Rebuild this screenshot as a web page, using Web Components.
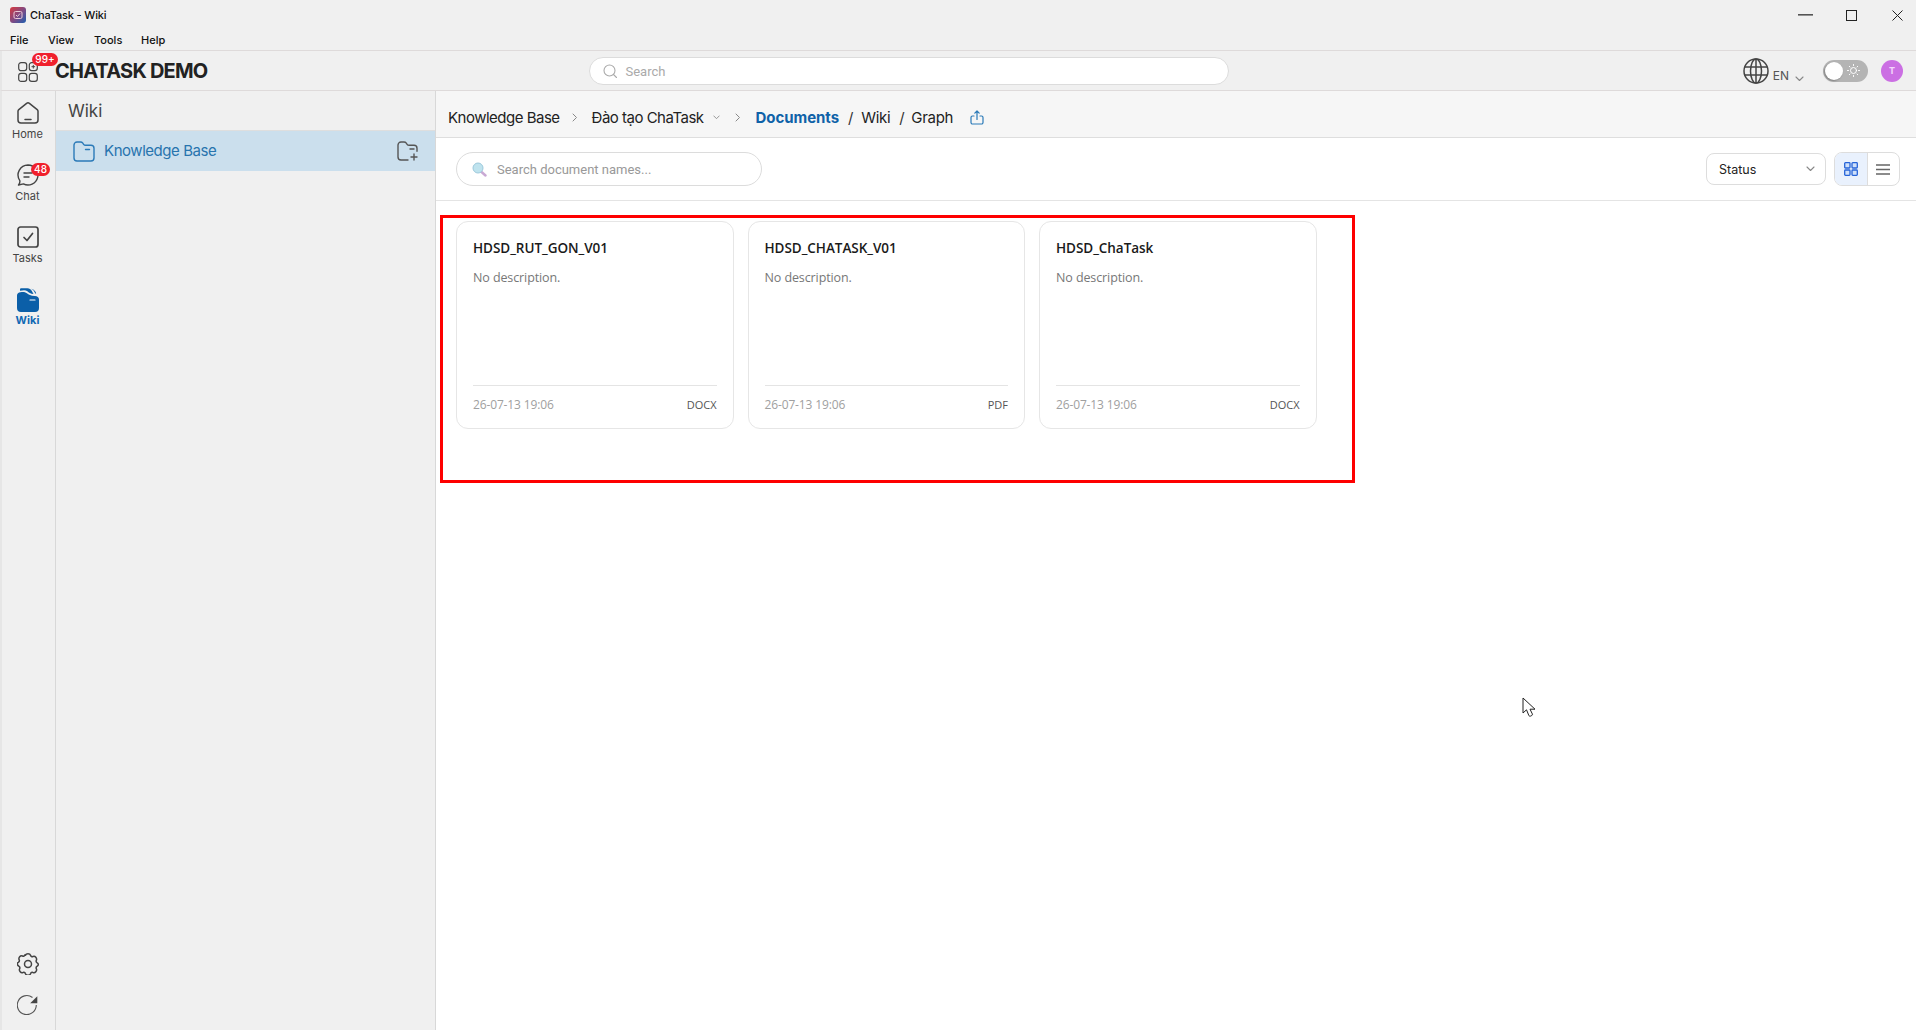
<!DOCTYPE html>
<html lang="en">
<head>
<meta charset="utf-8">
<title>ChaTask - Wiki</title>
<style>
    html, body { margin: 0; height: 100%; overflow: hidden; background: #fff; font-family: "Inter", "Liberation Sans", sans-serif; }
</style>
</head>
<body>
<chatask-app></chatask-app>

<script>
const ICONS = {
    home: `<svg width="22" height="22" viewBox="0 0 22 22" fill="none" stroke="#444" stroke-width="1.5" stroke-linejoin="round" stroke-linecap="round"><path d="M1 9.2c0-.7.3-1.2.8-1.6L9.6 1.3c.8-.6 2-.6 2.8 0l7.8 6.3c.5.4.8.9.8 1.6V18a3 3 0 0 1-3 3H4a3 3 0 0 1-3-3z"/><path d="M8 17.5h6"/></svg>`,
    chat: `<svg width="22" height="22" viewBox="0 0 22 22" fill="none" stroke="#444" stroke-width="1.4" stroke-linejoin="round" stroke-linecap="round"><path d="M11 1a10 10 0 1 1-4.6 18.9L1.5 21c1.3-1.6 1.6-3 1.3-4.4A10 10 0 0 1 11 1z"/><path d="M7 9h8M7 13h5"/></svg>`,
    tasks: `<svg width="22" height="22" viewBox="0 0 22 22" fill="none" stroke="#444" stroke-width="1.7" stroke-linejoin="round" stroke-linecap="round"><rect x="1" y="1" width="20" height="20" rx="2.5"/><path d="M7 11.5l3 3 5.5-7"/></svg>`,
    wiki: `<svg width="22" height="24" viewBox="0 0 22 24"><path fill="#0b5fa8" d="M3 1.5C3 .8 3.6.3 4.400.3h6.100c1.800 0 3.300 1 4.200 2.500l1.800 3.200c-3-.2-4.700-1.600-6.100-2.800-1.800-1.300-4-1.200-7.400-.4z"/><path fill="#0b5fa8" d="M14 .8c1.400.4 2.600 1.500 3.500 3.200l.7 1.600 1-.1c-.6-2.300-2.400-4.300-5.200-4.700z"/><path fill="#0b5fa8" d="M0 7.500C0 5.600 1.500 4.400 3.400 4.200c2.900-.4 4.500-.3 6.500 1.100 1.700 1.300 3.700 2.600 8 2.700 2.400 0 4.100 1.300 4.100 3.400V20a4 4 0 0 1-4 4H4a4 4 0 0 1-4-4z"/><path d="M13 12h5" stroke="#fff" stroke-width="1.200" stroke-linecap="round"/></svg>`,
    settings: `<svg width="22" height="22" viewBox="0 0 22 22" fill="none" stroke="#444" stroke-width="1.5" stroke-linejoin="round"><path d="M8.500 2.300c.3-1 1.300-1.500 2.500-1.500s2.200.5 2.500 1.500c.3 1.100 1.500 1.700 2.500 1.200 1-.4 2-.2 2.800.8.700.9 1.100 1.900.6 2.800-.5 1-.1 2.200.8 2.800.8.500 1.100 1 1.100 1.600s-.3 1.100-1.100 1.600c-.9.600-1.300 1.800-.8 2.800.5.900.1 1.900-.6 2.800-.8 1-1.800 1.200-2.800.8-1-.5-2.200.1-2.500 1.200-.3 1-1.300 1.500-2.500 1.500s-2.200-.5-2.500-1.500c-.3-1.100-1.500-1.700-2.500-1.200-1 .4-2 .2-2.800-.8-.7-.9-1.100-1.900-.6-2.800.5-1 .1-2.200-.8-2.800C.5 12.100.2 11.600.2 11s.3-1.100 1.100-1.600c.9-.6 1.300-1.800.8-2.800-.5-.9-.1-1.900.6-2.800.8-1 1.800-1.200 2.800-.8 1 .5 2.200-.1 2.500-1.200z"/><circle cx="11" cy="11" r="3.500"/></svg>`,
    refresh: `<svg width="21" height="21" viewBox="0 0 21 21" fill="none"><path d="M15.500 3.500A9.500 9.500 0 1 0 19.300 11" stroke="#555" stroke-width="1.100"/><path d="M20.300 2.200v7.100h-7.100z" fill="#444"/></svg>`,
    apps: `<svg width="20" height="20" viewBox="0 0 20 20" fill="none" stroke="#444" stroke-width="1.200"><rect x=".7" y=".7" width="8" height="8" rx="2.400"/><rect x="11.300" y=".7" width="8" height="8" rx="2.400"/><rect x=".7" y="11.300" width="8" height="8" rx="2.400"/><rect x="11.300" y="11.300" width="8" height="8" rx="2.400"/><path d="M13.500 4.700h3.600M15.300 2.900v3.600" stroke-width="1"/></svg>`,
    folder: `<svg width="22" height="21" viewBox="0 0 22 21" fill="none" stroke="#2b7ab8" stroke-width="1.400" stroke-linejoin="round" stroke-linecap="round"><path d="M1 4a3 3 0 0 1 3-3h3.500c1 0 1.700.4 2.300 1.200l.8 1.100c.5.700 1.200 1 2 1H18a3 3 0 0 1 3 3V17a3 3 0 0 1-3 3H4a3 3 0 0 1-3-3z"/><path d="M12.500 8.500h4"/></svg>`,
    folderAdd: `<svg width="21" height="20" viewBox="0 0 21 20" fill="none" stroke="#555" stroke-width="1.400" stroke-linejoin="round" stroke-linecap="round"><path d="M11 19H4a3 3 0 0 1-3-3V4a3 3 0 0 1 3-3h3c1 0 1.700.4 2.300 1.200l.8 1.100c.5.700 1.200 1 2 1H17a3 3 0 0 1 3 3v3"/><path d="M13 8h4M17 13v6M14 16h6"/></svg>`,
    globe: `<svg width="26" height="26" viewBox="0 0 26 26" fill="none" stroke="#444" stroke-width="1.500"><circle cx="13" cy="13" r="12"/><ellipse cx="13" cy="13" rx="5.500" ry="12"/><path d="M13 1v24M1.800 9h22.400M1.800 17h22.400"/></svg>`,
    sun: `<svg width="13" height="13" viewBox="0 0 13 13" fill="none" stroke="#fff" stroke-width="1" stroke-linecap="round"><circle cx="6.500" cy="6.500" r="3"/><path d="M6.500.5v1M6.500 11.500v1M.5 6.500h1M11.500 6.500h1M2.300 2.300l.7.700M10 10l.7.700M2.300 10.700l.7-.7M10 3l.7-.7"/></svg>`,
    share: `<svg width="14" height="15" viewBox="0 0 14 15" fill="none" stroke="#2b7ab8" stroke-width="1.200" stroke-linecap="round" stroke-linejoin="round"><path d="M4 6H2.500A1.500 1.500 0 0 0 1 7.500v5A1.500 1.500 0 0 0 2.500 14h9a1.500 1.500 0 0 0 1.500-1.500v-5A1.500 1.500 0 0 0 11.500 6H10"/><path d="M7 9.500V1M4.800 3.200L7 1l2.200 2.200"/></svg>`,
    lens: `<svg width="15" height="15" viewBox="0 0 15 15"><path d="M9 9.500l4.500 4" stroke="#c9a9d4" stroke-width="2.400" stroke-linecap="round"/><circle cx="6" cy="6" r="5" fill="#bfe3ee" stroke="#9cc9dc" stroke-width="1"/></svg>`,
    searchGrey: `<svg width="14" height="14" viewBox="0 0 14 14" fill="none" stroke="#aaa" stroke-width="1.100" stroke-linecap="round"><circle cx="6.500" cy="6.500" r="5.500"/><path d="M10.500 10.500l3 3"/></svg>`,
    chevDown: `<svg width="9" height="6" viewBox="0 0 9 6" fill="none" stroke="#888" stroke-width="1.100" stroke-linecap="round" stroke-linejoin="round"><path d="M1 1l3.500 3.500L8 1"/></svg>`,
    chevRight: `<svg width="6" height="9" viewBox="0 0 6 9" fill="none" stroke="#888" stroke-width="1" stroke-linecap="round" stroke-linejoin="round"><path d="M1 1l3.500 3.500L1 8"/></svg>`,
    grid: `<svg width="14" height="14" viewBox="0 0 14 14" fill="#cfe0fa" stroke="#2563d8" stroke-width="1.300"><rect x=".7" y=".7" width="5.300" height="5.300" rx=".8"/><rect x="8" y=".7" width="5.300" height="5.300" rx=".8"/><rect x=".7" y="8" width="5.300" height="5.300" rx=".8"/><rect x="8" y="8" width="5.300" height="5.300" rx=".8"/></svg>`,
    list: `<svg width="14" height="11" viewBox="0 0 14 11" fill="none" stroke="#666" stroke-width="1.400"><path d="M0 1h14M0 5.500h14M0 10h14"/></svg>`
};

class TitleBar extends HTMLElement {
    connectedCallback() {
        this.attachShadow({ mode: 'open' }).innerHTML = `
        <style>
            :host { display: block; height: 50px; background: #f0f0f0; border-bottom: 1px solid #dedada; color: #111; font: 500 11px "Inter", "Liberation Sans", sans-serif; }
            .top { height: 30px; display: flex; align-items: center; padding-left: 10px; }
            .logo { width: 16px; height: 16px; border-radius: 3px; background: linear-gradient(135deg, #d8383c, #7a4a86 55%, #1c5fb0); margin-right: 4px; display: flex; align-items: center; justify-content: center; }
            .name { letter-spacing: -.15px; }
            .win { margin-left: auto; margin-right: -4.500px; display: flex; align-items: center; }
            .btn { width: 46px; height: 22px; display: flex; align-items: center; justify-content: center; }
            .menu { display: flex; padding-left: 10px; height: 20px; align-items: center; }
            .menu span:nth-child(1) { width: 38px; }
            .menu span:nth-child(2) { width: 46px; }
            .menu span:nth-child(3) { width: 47px; }
        </style>
        <div class="top">
            <span class="logo"><svg width="10" height="10" viewBox="0 0 10 10" fill="none" stroke="#e9c9d6" stroke-width="1"><rect x="1" y="1.500" width="8" height="7" rx="1.500"/><path d="M3 5l1.500 1.500L7 3.500"/></svg></span>
            <span class="name">ChaTask - Wiki</span>
            <div class="win">
                <span class="btn"><svg width="15" height="2"><rect width="15" height="1.600" fill="#555"/></svg></span>
                <span class="btn"><svg width="11" height="11"><rect x=".5" y=".5" width="10" height="10" fill="none" stroke="#222"/></svg></span>
                <span class="btn"><svg width="11" height="11" fill="none" stroke="#222"><path d="M.5.500l10 10M10.500.500l-10 10"/></svg></span>
            </div>
        </div>
        <div class="menu"><span>File</span><span>View</span><span>Tools</span><span>Help</span></div>
        `;
    }
}

class AppHeader extends HTMLElement {
    connectedCallback() {
        this.attachShadow({ mode: 'open' }).innerHTML = `
        <style>
            :host { display: flex; align-items: center; box-sizing: border-box; height: 40px; background: #f0f0f0; border-bottom: 1px solid #dedada; border-left: 2px solid #e6e6e6; position: relative; font-family: "Inter", "Liberation Sans", sans-serif; }
            .apps { margin-left: 16px; width: 20px; height: 20px; display: flex; position: relative; top: 1px; }
            .badge { position: absolute; left: 14px; top: -9px; height: 13px; width: 26px; border-radius: 7px; background: #f0202c; color: #fff; font: 500 10px/13px "Inter", sans-serif; text-align: center; }
            h1 { margin: 0 0 0 17px; font-size: 20px; font-weight: 700; color: #222; letter-spacing: -.8px; width: 534px; white-space: nowrap; }
            .search { box-sizing: border-box; width: 640px; height: 28px; background: #fff; border: 1px solid #dcdcdc; border-radius: 14px; display: flex; align-items: center; padding-left: 13px; gap: 8.500px; color: #aaa; font: 13px "Roboto", sans-serif; }
            .search span { position: relative; top: 1px; }
            .right { margin-left: auto; display: flex; align-items: center; }
            .lang { display: flex; align-items: flex-end; color: #555; font-size: 12px; }
            .lang span { margin: 0 6px 0 4px; line-height: 14px; position: relative; top: -1px; }
            .lang i { display: flex; padding-bottom: 2px; }
            .toggle { width: 45px; height: 22px; border-radius: 11px; background: #b4b4b4; margin-left: 19px; display: flex; align-items: center; padding-left: 2px; box-sizing: border-box; gap: 4px; }
            .knob { width: 18px; height: 18px; border-radius: 50%; background: #fff; box-shadow: -1px 1px 2px rgba(0,0,0,.3); }
            .avatar { width: 22px; height: 22px; border-radius: 50%; background: #cb6fe3; color: #f4d7fb; margin: 0 13px; font: 700 9px/22px "Inter", sans-serif; text-align: center; }
        </style>
        <span class="apps">${ICONS.apps}<span class="badge">99+</span></span>
        <h1>CHATASK DEMO</h1>
        <div class="search">${ICONS.searchGrey}<span>Search</span></div>
        <div class="right">
            <div class="lang">${ICONS.globe}<span>EN</span><i>${ICONS.chevDown}</i></div>
            <div class="toggle"><span class="knob"></span>${ICONS.sun}</div>
            <div class="avatar">T</div>
        </div>
        `;
    }
}

class RailItem extends HTMLElement {
    connectedCallback() {
        const active = this.hasAttribute('active');
        const badge = this.getAttribute('badge');
        this.attachShadow({ mode: 'open' }).innerHTML = `
        <style>
            :host { display: flex; flex-direction: column; align-items: center; height: 62px; position: relative; font: ${active ? 700 : 400} 11px "Inter", "Liberation Sans", sans-serif; color: ${active ? '#1268b3' : '#444'}; }
            .ico { height: 24px; display: flex; }
            .lbl { margin-top: 1px; line-height: 14px; }
            .badge { position: absolute; left: 29px; top: -1px; width: 19px; height: 13px; border-radius: 7px; background: #f0202c; color: #fff; font: 500 10px/13px "Inter", sans-serif; text-align: center; }
        </style>
        <div class="ico">${ICONS[this.getAttribute('icon')]}</div>
        <div class="lbl"><slot></slot></div>
        ${badge ? `<span class="badge">${badge}</span>` : ''}
        `;
    }
}

class NavRail extends HTMLElement {
    connectedCallback() {
        this.attachShadow({ mode: 'open' }).innerHTML = `
        <style>
            :host { display: flex; flex-direction: column; box-sizing: border-box; width: 56px; background: #f0f0f0; border-right: 1px solid #d8d8d8; border-left: 2px solid #e6e6e6; padding: 11px 2px 15px 0; }
            .foot { margin-top: auto; display: flex; flex-direction: column; align-items: center; gap: 19px; }
            .foot span { display: flex; }
        </style>
        <slot></slot>
        <div class="foot"><span>${ICONS.settings}</span><span>${ICONS.refresh}</span></div>
        `;
    }
}

class WikiSidebar extends HTMLElement {
    connectedCallback() {
        this.attachShadow({ mode: 'open' }).innerHTML = `
        <style>
            :host { display: block; box-sizing: border-box; width: 380px; background: #f0f0f0; border-right: 1px solid #d8d8d8; font-family: "Inter", "Liberation Sans", sans-serif; }
            .head { height: 40px; box-sizing: border-box; border-bottom: 1px solid #dedede; padding-left: 12px; font-size: 17px; line-height: 40px; color: #444; }
            .row { height: 40px; background: #cbdfed; display: flex; align-items: center; padding: 0 17px; color: #2874ae; font-size: 15px; letter-spacing: -.45px; }
            .row span { margin-left: 9px; position: relative; top: -1px; }
            .row i { margin-left: auto; display: flex; }
            svg { display: block; }
        </style>
        <div class="head"><slot name="title"></slot></div>
        <div class="row">${ICONS.folder}<span><slot name="item"></slot></span><i>${ICONS.folderAdd}</i></div>
        `;
    }
}

class BreadCrumbs extends HTMLElement {
    connectedCallback() {
        this.attachShadow({ mode: 'open' }).innerHTML = `
        <style>
            :host { display: flex; align-items: center; box-sizing: border-box; height: 47px; background: #f6f6f6; border-bottom: 1px solid #dedede; padding: 7px 0 0 12px; font: 400 15px "Inter", "Liberation Sans", sans-serif; color: #222; letter-spacing: -.3px; white-space: nowrap; }
            i { display: flex; }
            .a { margin: 0 14px 0 12px; }
            .b { margin: 0 15px 0 9px; }
            .b svg { width: 7px; height: 5px; }
            .c { margin: 0 15px 0 0; }
            .t { letter-spacing: -.5px; }
            b { color: #0f62a8; font-weight: 700; letter-spacing: -.05px; }
            .s { margin: 0 8px 0 9px; color: #333; }
            .g { margin-left: -1px; }
            .share { margin-left: 17px; }
        </style>
        <span class="t">Knowledge Base</span><i class="a">${ICONS.chevRight}</i>
        <span class="t">Đào tạo ChaTask</span><i class="b">${ICONS.chevDown}</i><i class="c">${ICONS.chevRight}</i>
        <b>Documents</b><span class="s">/</span><span>Wiki</span><span class="s">/</span><span class="g">Graph</span>
        <i class="share">${ICONS.share}</i>
        `;
    }
}

class DocToolbar extends HTMLElement {
    connectedCallback() {
        this.attachShadow({ mode: 'open' }).innerHTML = `
        <style>
            :host { display: flex; align-items: center; box-sizing: border-box; height: 63px; border-bottom: 1px solid #e4e4e4; padding: 0 16px 0 20px; background: #fff; font-family: "Roboto", "Liberation Sans", sans-serif; }
            .search { box-sizing: border-box; width: 306px; height: 34px; border: 1px solid #dcdcdc; border-radius: 17px; display: flex; align-items: center; padding-left: 15px; gap: 10px; color: #999; font-size: 13px; }
            .status { box-sizing: border-box; width: 120px; height: 32px; margin-left: auto; border: 1px solid #ddd; border-radius: 8px; display: flex; align-items: center; padding: 0 10px 0 12px; font: 12.500px "Inter", sans-serif; color: #222; justify-content: space-between; }
            .view { margin-left: 8px; display: flex; box-sizing: border-box; width: 66px; height: 34px; border: 1px solid #ddd; border-radius: 8px; overflow: hidden; }
            .view span { flex: 1; display: flex; align-items: center; justify-content: center; }
            .view .on { background: #e9f1fd; border-right: 1px solid #ddd; }
        </style>
        <div class="search">${ICONS.lens}<span>Search document names...</span></div>
        <div class="status"><span>Status</span>${ICONS.chevDown}</div>
        <div class="view"><span class="on">${ICONS.grid}</span><span>${ICONS.list}</span></div>
        `;
    }
}

class DocCard extends HTMLElement {
    connectedCallback() {
        this.attachShadow({ mode: 'open' }).innerHTML = `
        <style>
            :host { display: flex; flex-direction: column; box-sizing: border-box; height: 208px; border: 1px solid #e6e6e6; border-radius: 12px; padding: 16px 16px 0; background: #fff; font-family: "Open Sans", "Liberation Sans", sans-serif; }
            .name { font-size: 13.500px; font-weight: 600; color: #1a1a1a; line-height: 20px; letter-spacing: -.05px; }
            .desc { font-size: 12.500px; color: #777; margin-top: 11px; line-height: 18px; letter-spacing: -.1px; }
            .foot { margin-top: auto; border-top: 1px solid #e4e4e4; height: 37px; display: flex; align-items: center; justify-content: space-between; margin-bottom: 5px; }
            .date { font-size: 12px; color: #a0a0a0; letter-spacing: -.14px; }
            .type { font-size: 11px; font-weight: 500; color: #555; }
        </style>
        <div class="name"><slot name="name"></slot></div>
        <div class="desc"><slot name="desc"></slot></div>
        <div class="foot"><span class="date"><slot name="date"></slot></span><span class="type"><slot name="type"></slot></span></div>
        `;
    }
}

class ChataskApp extends HTMLElement {
    connectedCallback() {
        const docs = [
            ['HDSD_RUT_GON_V01', 'DOCX'],
            ['HDSD_CHATASK_V01', 'PDF'],
            ['HDSD_ChaTask', 'DOCX']
        ];
        this.attachShadow({ mode: 'open' }).innerHTML = `
        <style>
            :host { display: flex; flex-direction: column; height: 1030px; position: relative; overflow: hidden; }
            .main { flex: 1; display: flex; min-height: 0; }
            .pane { flex: 1; min-width: 0; background: #fff; }
            .grid { display: grid; grid-template-columns: repeat(auto-fill, 277.500px); gap: 14px; padding: 20px; }
            .mark { position: absolute; left: 440px; top: 215px; width: 915px; height: 268px; box-sizing: border-box; border: 3px solid #fe0000; pointer-events: none; }
            .cursor { position: absolute; left: 1522px; top: 697px; }
        </style>
        <title-bar></title-bar>
        <app-header></app-header>
        <div class="main">
            <nav-rail>
                <rail-item icon="home">Home</rail-item>
                <rail-item icon="chat" badge="48">Chat</rail-item>
                <rail-item icon="tasks">Tasks</rail-item>
                <rail-item icon="wiki" active>Wiki</rail-item>
            </nav-rail>
            <wiki-sidebar><span slot="title">Wiki</span><span slot="item">Knowledge Base</span></wiki-sidebar>
            <div class="pane">
                <bread-crumbs></bread-crumbs>
                <doc-toolbar></doc-toolbar>
                <div class="grid">
                    ${docs.map(d => `<doc-card><span slot="name">${d[0]}</span><span slot="desc">No description.</span><span slot="date">26-07-13 19:06</span><span slot="type">${d[1]}</span></doc-card>`).join('')}
                </div>
            </div>
        </div>
        <div class="mark"></div>
        <svg class="cursor" width="14" height="21" viewBox="0 0 14 21"><path d="M1 1v15l3.500-3.200 2.300 5.600c.3.700 1 1 1.700.7l1.200-.5c.7-.3.9-1 .6-1.700L8 12.200h5z" fill="#fff" stroke="#222" stroke-width="1" stroke-linejoin="round"/></svg>
        `;
    }
}

customElements.define('title-bar', TitleBar);
customElements.define('app-header', AppHeader);
customElements.define('rail-item', RailItem);
customElements.define('nav-rail', NavRail);
customElements.define('wiki-sidebar', WikiSidebar);
customElements.define('bread-crumbs', BreadCrumbs);
customElements.define('doc-toolbar', DocToolbar);
customElements.define('doc-card', DocCard);
customElements.define('chatask-app', ChataskApp);
</script>
</body>
</html>
